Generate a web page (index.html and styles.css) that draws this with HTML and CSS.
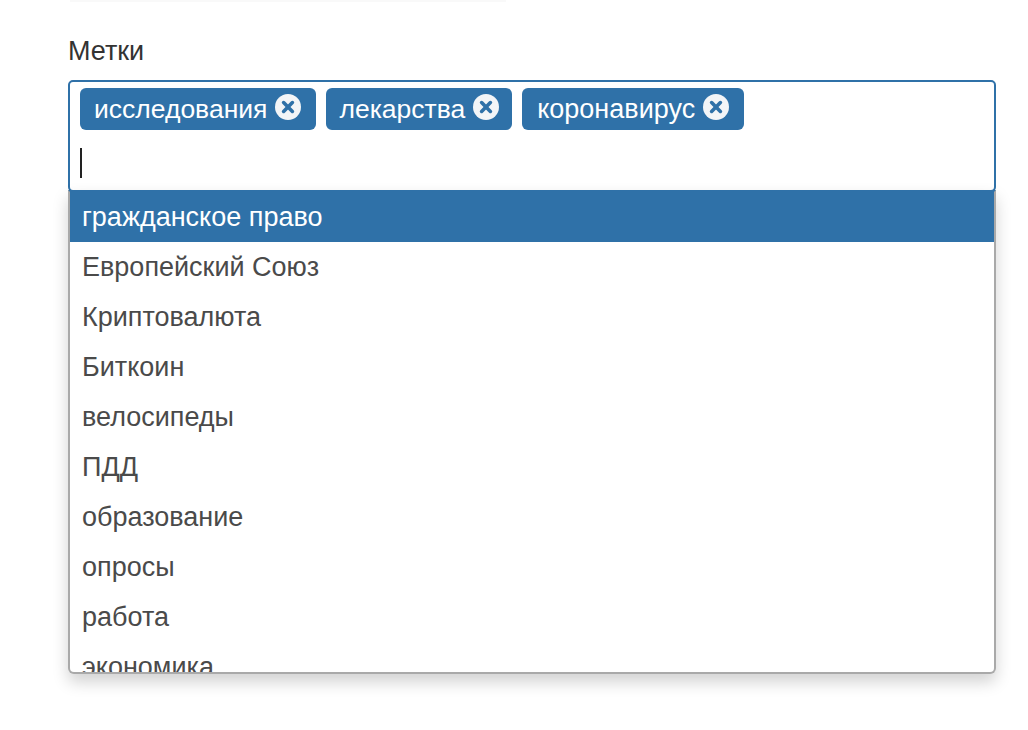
FILE: index.html
```html
<!DOCTYPE html>
<html lang="ru">
<head>
<meta charset="utf-8">
<title>Метки</title>
<link rel="stylesheet" href="styles.css">
</head>
<body>
<div class="page">
  <div class="top-rule"></div>
  <label class="field-label">Метки</label>
  <div class="control">
    <div class="tags">
      <span class="tag">исследования<svg class="tag-x" viewBox="0 0 26 26"><circle cx="13" cy="13" r="13" fill="#f3f5f7"/><path d="M8.6 8.6 17.4 17.4M17.4 8.6 8.6 17.4" stroke="#2f71a8" stroke-width="3.6" stroke-linecap="round"/></svg></span>
      <span class="tag tag-tight">лекарства<svg class="tag-x" viewBox="0 0 26 26"><circle cx="13" cy="13" r="13" fill="#f3f5f7"/><path d="M8.6 8.6 17.4 17.4M17.4 8.6 8.6 17.4" stroke="#2f71a8" stroke-width="3.6" stroke-linecap="round"/></svg></span>
      <span class="tag tag-wide">коронавирус<svg class="tag-x" viewBox="0 0 26 26"><circle cx="13" cy="13" r="13" fill="#f3f5f7"/><path d="M8.6 8.6 17.4 17.4M17.4 8.6 8.6 17.4" stroke="#2f71a8" stroke-width="3.6" stroke-linecap="round"/></svg></span>
    </div>
    <div class="input-row"><span class="caret"></span></div>
  </div>
  <ul class="menu">
    <li class="item active">гражданское право</li>
    <li class="item">Европейский Союз</li>
    <li class="item">Криптовалюта</li>
    <li class="item">Биткоин</li>
    <li class="item">велосипеды</li>
    <li class="item">ПДД</li>
    <li class="item">образование</li>
    <li class="item">опросы</li>
    <li class="item">работа</li>
    <li class="item">экономика</li>
  </ul>
</div>
</body>
</html>
```
FILE: styles.css
```css
* { box-sizing: border-box; }
html, body { margin: 0; padding: 0; background: #fff; }
body {
  font-family: "Liberation Sans", Arial, sans-serif;
  font-size: 27px;
  color: #333;
  height: 730px;
  overflow: hidden;
}
.page { width: 928px; margin-left: 68px; }
.top-rule { height: 2px; width: 436px; margin-left: 2px; background: #f9f9f9; }
.field-label { display: block; margin-top: 35px; height: 43px; line-height: 29px; color: #333; }
.control {
  height: 112px;
  border: 2px solid #2f71a8;
  border-radius: 5px;
  padding: 6px 10px 0;
  background: #fff;
}
.tags { display: flex; gap: 10px; }
.tag {
  display: flex;
  align-items: center;
  height: 42px;
  padding: 0 15px 0 14px;
  background: #2f71a8;
  border-radius: 6px;
  color: #fff;
  font-size: 26.5px;
  line-height: 42px;
}
.tag-tight { padding: 0 13px; }
.tag-wide { padding: 0 15px; font-size: 27px; }
.tag-x { width: 26px; height: 26px; margin: -5px 0 0 8px; flex: none; }
.input-row { display: flex; height: 44px; padding-top: 18px; }
.caret { width: 2px; height: 30px; background: #222; }
.menu {
  list-style: none;
  margin: -2px 0 0;
  padding: 0;
  height: 484px;
  overflow: hidden;
  position: relative;
  border: 2px solid #a9a9a9;
  border-top: 2px solid #2f71a8;
  border-radius: 0 0 6px 6px;
  box-shadow: 0 8px 16px rgba(0, 0, 0, 0.18);
  background: #fff;
  color: #4a4a4a;
}
.item { height: 50px; line-height: 50px; padding-left: 12px; white-space: nowrap; }
.item.active { background: #2f71a8; color: #fff; }
```
